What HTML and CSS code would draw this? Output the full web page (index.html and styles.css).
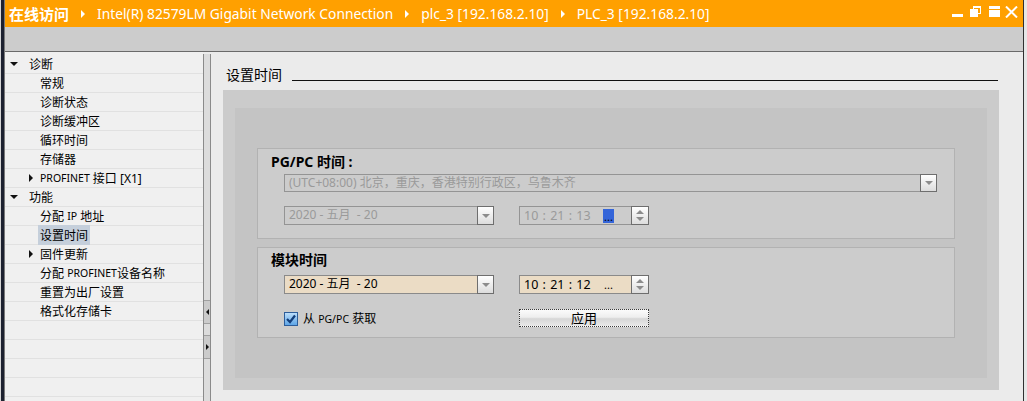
FILE: index.html
```html
<!DOCTYPE html>
<html>
<head>
    <meta charset="UTF-8">
    <title>设置时间</title>
    <link rel="stylesheet" href="styles.css">
</head>
<body>
<div class="screen">
    <div class="edge-left"></div>
    <div class="window">
        <div class="titlebar">
            <div class="crumbs">
                <span class="crumb-root">在线访问</span>
                <span class="crumb-sep"></span>
                <span class="crumb">Intel(R) 82579LM Gigabit Network Connection</span>
                <span class="crumb-sep"></span>
                <span class="crumb">plc_3 [192.168.2.10]</span>
                <span class="crumb-sep"></span>
                <span class="crumb">PLC_3 [192.168.2.10]</span>
            </div>
            <svg class="win-buttons" width="66" height="12" viewBox="0 0 66 12">
                <rect x="0" y="8" width="11" height="3" fill="#fff"/>
                <rect x="21.5" y="0.5" width="7" height="7" fill="none" stroke="#fff"/>
                <rect x="21" y="0" width="8" height="2" fill="#fff"/>
                <rect x="18" y="3" width="8" height="8" fill="#fff"/>
                <rect x="37" y="0" width="11" height="3" fill="#fff"/>
                <rect x="37" y="4" width="11" height="7" fill="#fff"/>
                <path d="M54 0.5 L65 11.5 M65 0.5 L54 11.5" stroke="#fff" stroke-width="2"/>
            </svg>
        </div>
        <div class="toolbar"></div>
        <div class="main">
            <ul class="tree">
                <li class="lvl0"><span class="caret caret-down"></span>诊断</li>
                <li class="lvl1">常规</li>
                <li class="lvl1">诊断状态</li>
                <li class="lvl1">诊断缓冲区</li>
                <li class="lvl1">循环时间</li>
                <li class="lvl1">存储器</li>
                <li class="lvl1 has-kids"><span class="caret caret-right"></span><span class="latin">PROFINET</span>&nbsp;接口 [X1]</li>
                <li class="lvl0"><span class="caret caret-down"></span>功能</li>
                <li class="lvl1">分配&nbsp;<span class="latin">IP</span>&nbsp;地址</li>
                <li class="lvl1"><span class="selected">设置时间</span></li>
                <li class="lvl1 has-kids"><span class="caret caret-right"></span>固件更新</li>
                <li class="lvl1">分配&nbsp;<span class="latin">PROFINET</span>设备名称</li>
                <li class="lvl1">重置为出厂设置</li>
                <li class="lvl1">格式化存储卡</li>
                <li></li>
                <li></li>
                <li></li>
                <li></li>
            </ul>
            <div class="splitter">
                <div class="split-space"></div>
                <div class="split-btn"><span class="arrow-left"></span></div>
                <div class="split-gap"></div>
                <div class="split-btn"><span class="arrow-right"></span></div>
            </div>
            <div class="content">
                <div class="section-title">
                    <span>设置时间</span>
                    <div class="rule"></div>
                </div>
                <div class="panel-outer">
                    <div class="panel-inner">
                        <div class="group">
                            <div class="group-label">PG/PC 时间 :</div>
                            <div class="combo combo-tz disabled">
                                <div class="combo-text">(UTC+08:00) 北京，重庆，香港特别行政区，乌鲁木齐</div>
                                <div class="combo-btn"><span class="tri-down"></span></div>
                            </div>
                            <div class="field-row row-pc">
                                <div class="combo combo-date disabled">
                                    <div class="combo-text">2020 - 五月&nbsp; - 20</div>
                                    <div class="combo-btn"><span class="tri-down"></span></div>
                                </div>
                                <div class="time-field disabled">
                                    <div class="time-text"><span class="time-value">10 : 21 : 13</span><span class="time-dots active">...</span></div>
                                    <div class="spinner"><span class="tri-up"></span><span class="tri-down"></span></div>
                                </div>
                            </div>
                        </div>
                        <div class="group">
                            <div class="group-label label-module">模块时间</div>
                            <div class="field-row row-module">
                                <div class="combo combo-date editable">
                                    <div class="combo-text">2020 - 五月&nbsp; - 20</div>
                                    <div class="combo-btn"><span class="tri-down"></span></div>
                                </div>
                                <div class="time-field editable">
                                    <div class="time-text"><span class="time-value">10 : 21 : 12</span><span class="time-dots">...</span></div>
                                    <div class="spinner"><span class="tri-up"></span><span class="tri-down"></span></div>
                                </div>
                            </div>
                            <div class="check-row">
                                <label class="check">
                                    <svg width="14" height="14" viewBox="0 0 14 14">
                                        <defs>
                                            <linearGradient id="cb" x1="0" y1="0" x2="0" y2="1">
                                                <stop offset="0" stop-color="#bfe0fb"/>
                                                <stop offset="1" stop-color="#5aa3e6"/>
                                            </linearGradient>
                                        </defs>
                                        <rect x="0.5" y="0.5" width="13" height="13" fill="url(#cb)" stroke="#2d5d9a"/>
                                        <path d="M3 7 L6 10 L11 3.5" fill="none" stroke="#123d7a" stroke-width="2.2"/>
                                    </svg>
                                    <span>从 <span class="latin">PG/PC</span> 获取</span>
                                </label>
                                <div class="apply-button">应用</div>
                            </div>
                        </div>
                    </div>
                </div>
            </div>
        </div>
    </div>
    <div class="edge-right"></div>
</div>
</body>
</html>
```

FILE: styles.css
```css
html, body {
    margin: 0;
    padding: 0;
}
body {
    font-family: "Noto Sans", "Noto Sans CJK SC", sans-serif;
    font-size: 12px;
    color: #000;
    background-color: #ebebeb;
}
.screen {
    display: flex;
    width: 1027px;
    height: 401px;
    overflow: hidden;
}
.edge-left {
    width: 3px;
    border-left: 1px solid #d6d6d6;
    border-right: 1px solid #7a7a7a;
    background-color: #1d2130;
}
.edge-right {
    width: 3px;
    border-left: 1px solid #303030;
    background-color: #e6e6e6;
}
.window {
    flex: 1;
    display: flex;
    flex-direction: column;
    min-width: 0;
}

/* 标题栏 */
.titlebar {
    height: 27px;
    background-color: #ffa000;
    color: #fff;
    display: flex;
    justify-content: space-between;
    align-items: center;
}
.crumbs {
    display: flex;
    align-items: center;
    padding-left: 4px;
    white-space: nowrap;
}
.crumb-root {
    font-size: 15px;
    font-weight: bold;
    font-family: "Noto Sans CJK SC", sans-serif;
}
.crumb {
    font-size: 13.8px;
}
.crumb-sep {
    width: 0;
    height: 0;
    margin: 0 12px 0 12px;
    border-top: 4px solid transparent;
    border-bottom: 4px solid transparent;
    border-left: 4px solid #fff;
}
.win-buttons {
    align-self: flex-start;
    margin-top: 6px;
    margin-right: 5px;
}
.toolbar {
    height: 24px;
    background-color: #cccccc;
    border-bottom: 1px solid #6a6a6a;
}

.main {
    flex: 1;
    display: flex;
    min-height: 0;
}

/* 左侧树 */
.tree {
    list-style-type: none;
    margin: 0;
    padding: 3px 0 0 0;
    width: 198px;
    background-color: #f0f0f0;
}
.tree li {
    height: 19px;
    box-sizing: border-box;
    border-bottom: 1px solid #e1e1e1;
    display: flex;
    align-items: center;
    white-space: nowrap;
}
.tree .lvl0 {
    padding-left: 5px;
}
.tree .lvl1 {
    padding-left: 35px;
}
.tree .lvl1.has-kids {
    padding-left: 24px;
}
.caret {
    display: inline-block;
    width: 0;
    height: 0;
}
.caret-down {
    border-left: 4px solid transparent;
    border-right: 4px solid transparent;
    border-top: 4px solid #111;
    margin-right: 11px;
}
.caret-right {
    border-top: 4px solid transparent;
    border-bottom: 4px solid transparent;
    border-left: 4px solid #111;
    margin-right: 7px;
}
.latin {
    font-size: 10.5px;
}
.selected {
    background-color: #c5cfdb;
    padding: 1px 2px;
    margin-left: -2px;
}

/* 分隔条 */
.splitter {
    width: 6px;
    margin-top: 2px;
    border-left: 1px solid #8a8a8a;
    border-right: 1px solid #8a8a8a;
    background-color: #dcdcdc;
    display: flex;
    flex-direction: column;
}
.split-space {
    height: 246px;
}
.split-gap {
    height: 11px;
}
.split-btn {
    height: 22px;
    border-top: 1px solid #a0a0a0;
    border-bottom: 1px solid #a0a0a0;
    background-color: #cbcbcb;
    display: flex;
    align-items: center;
    justify-content: center;
}
.arrow-left {
    border-top: 3px solid transparent;
    border-bottom: 3px solid transparent;
    border-right: 3px solid #111;
}
.arrow-right {
    border-top: 3px solid transparent;
    border-bottom: 3px solid transparent;
    border-left: 3px solid #111;
}

/* 内容区 */
.content {
    flex: 1;
    padding: 14px 24px 0 12px;
}
.section-title {
    display: flex;
    height: 17px;
    line-height: 17px;
    font-size: 14px;
    font-family: "Noto Sans CJK SC", sans-serif;
    padding-left: 3px;
}
.section-title .rule {
    flex: 1;
    align-self: flex-end;
    margin: 0 1px 2px 10px;
    border-bottom: 1px solid #111;
}
.panel-outer {
    margin-top: 7px;
    height: 300px;
    box-sizing: border-box;
    padding: 18px 12px 12px 12px;
    background-color: #cbcbcb;
}
.panel-inner {
    height: 100%;
    box-sizing: border-box;
    padding: 40px 32px 0 22px;
    background-color: #c4c4c4;
    display: flex;
    flex-direction: column;
    gap: 8px;
}
.group {
    height: 91px;
    box-sizing: border-box;
    border: 1px solid #b2b2b2;
    background-color: #cccccc;
    display: flex;
    flex-direction: column;
}
.group-label {
    margin: 4px 0 0 13px;
    height: 17px;
    line-height: 17px;
    font-size: 14px;
    font-weight: bold;
}
.label-module {
    margin-top: 3px;
}

/* 下拉框 */
.combo {
    display: flex;
    height: 19px;
    box-sizing: border-box;
    border: 1px solid #949494;
}
.combo.disabled {
    color: #9a9a9a;
}
.combo.editable {
    background-color: #ebdcc5;
    border-color: #8a8a8a;
}
.combo-tz {
    margin: 4px 0 0 26px;
    width: 653px;
    height: 18px;
}
.combo-date {
    width: 210px;
}
.combo-text {
    flex: 1;
    padding-left: 4px;
    line-height: 16px;
    white-space: nowrap;
    overflow: hidden;
}
.combo-btn {
    width: 15px;
    margin: -1px -1px -1px 0;
    border: 1px solid #6e6e6e;
    background: linear-gradient(#ffffff, #dcdcdc);
    display: flex;
    align-items: center;
    justify-content: center;
}
.tri-down {
    border-left: 4px solid transparent;
    border-right: 4px solid transparent;
    border-top: 4px solid #8c8c8c;
}
.tri-up {
    border-left: 4px solid transparent;
    border-right: 4px solid transparent;
    border-bottom: 4px solid #8c8c8c;
}

.field-row {
    display: flex;
    gap: 25px;
    margin-left: 26px;
}
.row-pc {
    margin-top: 14px;
}
.row-module {
    margin-top: 7px;
}

/* 时间输入框 */
.time-field {
    width: 130px;
    height: 19px;
    box-sizing: border-box;
    border: 1px solid #949494;
    display: flex;
}
.time-field.disabled {
    color: #9a9a9a;
}
.time-field.editable {
    background-color: #ebdcc5;
    border-color: #8a8a8a;
}
.time-text {
    flex: 1;
    display: flex;
    padding-left: 4px;
    line-height: 17px;
    white-space: nowrap;
}
.time-value {
    width: 79px;
    font-size: 12.5px;
    word-spacing: 1px;
}
.time-dots {
    width: 11px;
    color: #000;
    font-size: 11px;
    line-height: 19px;
    text-align: center;
    margin-top: -1px;
}
.time-dots.active {
    background-color: #3465d9;
    margin-top: 2px;
    height: 14px;
    line-height: 16px;
}
.spinner {
    width: 16px;
    margin: -1px -1px -1px 0;
    border: 1px solid #6e6e6e;
    background: linear-gradient(#ffffff, #dddddd);
    display: flex;
    flex-direction: column;
    align-items: center;
    justify-content: space-evenly;
}

/* 复选框和按钮 */
.check-row {
    display: flex;
    align-items: center;
    gap: 25px;
    margin: 15px 0 0 26px;
    height: 18px;
}
.check {
    width: 210px;
    display: flex;
    align-items: center;
    gap: 5px;
    font-size: 12px;
}
.check svg {
    margin-top: 2px;
}
.apply-button {
    width: 130px;
    height: 18px;
    box-sizing: border-box;
    border: 1px dotted #3a3a3a;
    background: linear-gradient(#fbfbfb, #eeeeee 45%, #d6d6d6 55%, #eaeaea);
    text-align: center;
    line-height: 16px;
    font-size: 13px;
    font-family: "Noto Sans CJK SC", sans-serif;
}
```
